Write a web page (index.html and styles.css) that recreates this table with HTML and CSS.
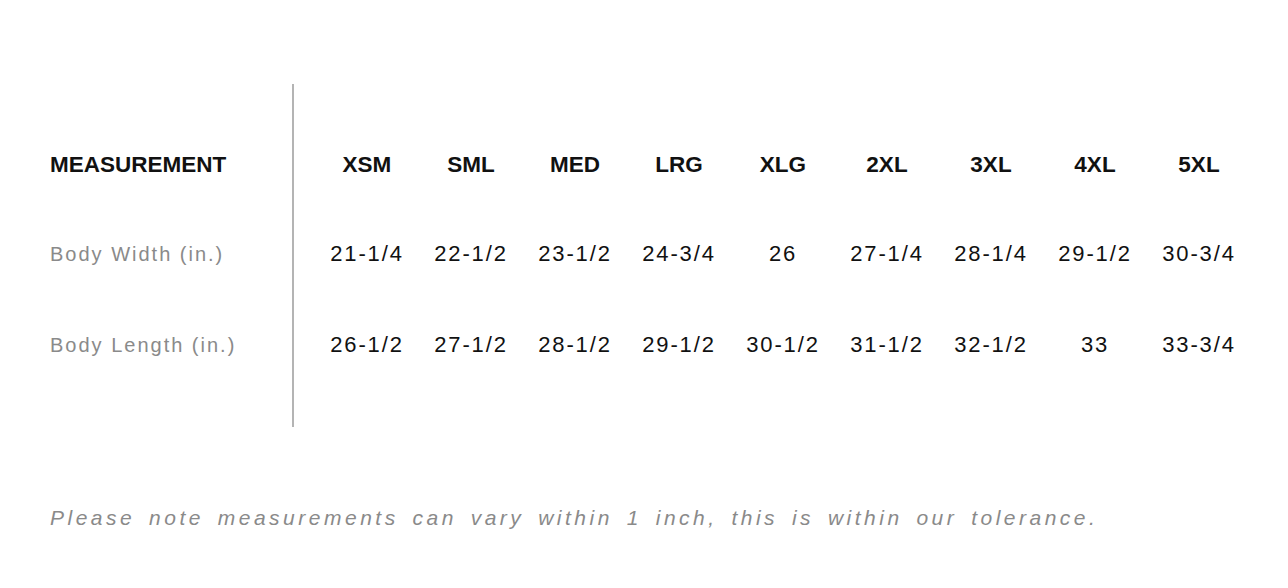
FILE: index.html
```html
<!DOCTYPE html>
<html>
<head>
<meta charset="utf-8">
<link rel="stylesheet" href="styles.css">
</head>
<body>
<div class="page">
  <div class="chart">
    <div class="labels">
      <div class="cell head">MEASUREMENT</div>
      <div class="cell label">Body Width (in.)</div>
      <div class="cell label">Body Length (in.)</div>
    </div>
    <div class="sizes">
      <div class="cell head c">XSM</div>
      <div class="cell head c">SML</div>
      <div class="cell head c">MED</div>
      <div class="cell head c">LRG</div>
      <div class="cell head c">XLG</div>
      <div class="cell head c">2XL</div>
      <div class="cell head c">3XL</div>
      <div class="cell head c">4XL</div>
      <div class="cell head c">5XL</div>
      <div class="cell num c">21-1/4</div>
      <div class="cell num c">22-1/2</div>
      <div class="cell num c">23-1/2</div>
      <div class="cell num c">24-3/4</div>
      <div class="cell num c">26</div>
      <div class="cell num c">27-1/4</div>
      <div class="cell num c">28-1/4</div>
      <div class="cell num c">29-1/2</div>
      <div class="cell num c">30-3/4</div>
      <div class="cell num c">26-1/2</div>
      <div class="cell num c">27-1/2</div>
      <div class="cell num c">28-1/2</div>
      <div class="cell num c">29-1/2</div>
      <div class="cell num c">30-1/2</div>
      <div class="cell num c">31-1/2</div>
      <div class="cell num c">32-1/2</div>
      <div class="cell num c">33</div>
      <div class="cell num c">33-3/4</div>
    </div>
  </div>
  <p class="note">Please note measurements can vary within 1 inch, this is within our tolerance.</p>
</div>
</body>
</html>
```

FILE: styles.css
```css
html, body {
  margin: 0;
  padding: 0;
  background: #ffffff;
}
body {
  font-family: "Liberation Sans", Arial, sans-serif;
  color: #111;
}
.page {
  padding: 84px 0 0 50px;
}
.chart {
  display: flex;
}
.labels {
  width: 242px;
  border-right: 2px solid #b4b4b4;
  padding: 35px 0 38px;
}
.sizes {
  display: grid;
  grid-template-columns: repeat(9, 104px);
  padding: 35px 0 38px 21px;
}
.cell {
  height: 90px;
  display: flex;
  align-items: center;
  white-space: nowrap;
  box-sizing: border-box;
}
.head {
  padding-top: 2px;
}
.sizes .cell:nth-child(n+19),
.labels .cell:nth-child(3) {
  padding-top: 2px;
}
.c {
  justify-content: center;
}
.head {
  font-weight: 700;
  font-size: 22.5px;
  color: #111;
}
.label {
  font-size: 20px;
  letter-spacing: 2px;
  color: #8a8a8a;
}
.num {
  font-size: 22px;
  letter-spacing: 1.85px;
  color: #111;
}
.note {
  margin: 79px 0 0;
  font-size: 21px;
  line-height: 24px;
  font-style: italic;
  letter-spacing: 3.5px;
  word-spacing: 4.5px;
  color: #8a8a8a;
}
```
